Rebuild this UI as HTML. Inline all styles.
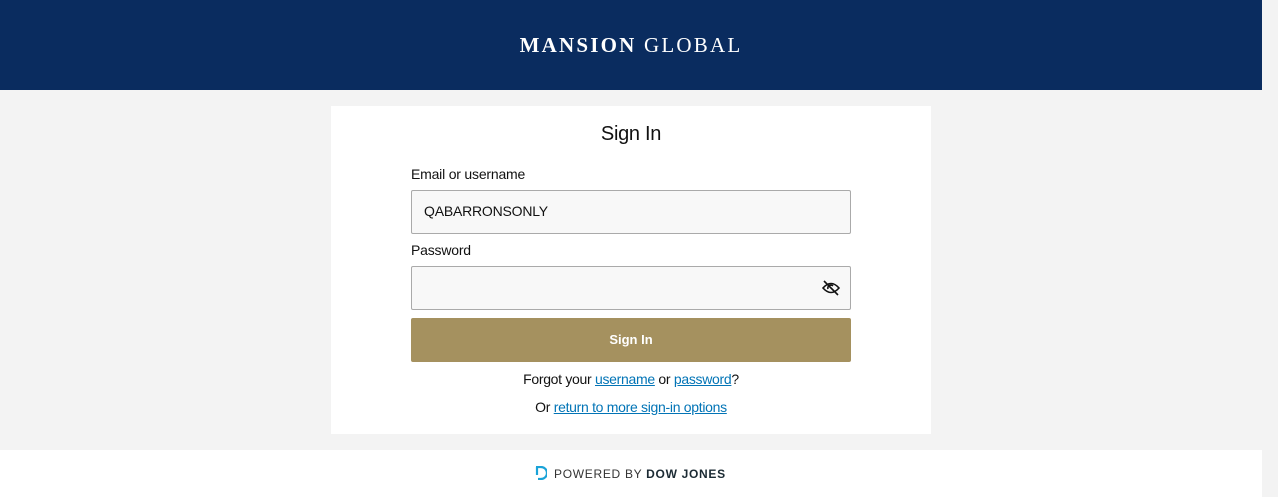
<!DOCTYPE html>
<html><head><meta charset="utf-8"><style>
*{margin:0;padding:0;box-sizing:border-box}
body{width:1278px;height:497px;background:#f3f3f3;font-family:"Liberation Sans",sans-serif;color:#111;position:relative;overflow:hidden}
.hdr{position:absolute;left:0;top:0;width:1262px;height:90px;background:#0a2c5f}
.logo{position:absolute;left:0;width:1262px;top:33px;text-align:center;color:#fff;font-family:"Liberation Serif",serif;font-size:21px;letter-spacing:2.2px}
.card{position:absolute;left:331px;top:106px;width:600px;height:328px;background:#fff}
h1{position:absolute;left:0;width:600px;top:17px;text-align:center;font-weight:normal;font-size:20px;letter-spacing:-0.3px}
.lbl{position:absolute;left:80px;font-size:14px;letter-spacing:-0.2px}
.inp{position:absolute;left:80px;width:440px;height:44px;background:#f8f8f8;border:1px solid #aaa;border-radius:2px;font-size:14px;padding:12px 12px;letter-spacing:-0.2px}
.btn{position:absolute;left:80px;top:212px;width:440px;height:44px;background:#a5915f;border-radius:2px;color:#fff;font-weight:bold;font-size:13px;text-align:center;line-height:44px}
.t{position:absolute;left:0;width:600px;text-align:center;font-size:14px;letter-spacing:-0.3px}
a{color:#0274b6;text-decoration:underline}
.ftr{position:absolute;left:0;top:450px;width:1262px;height:47px;background:#fff}
.pw{position:absolute;left:554px;top:467px;font-size:12px;letter-spacing:0.7px;color:#333}
</style></head><body>
<div class="hdr"><div class="logo"><b>MANSION</b> GLOBAL</div></div>
<div class="card">
<h1>Sign In</h1>
<div class="lbl" style="top:60px">Email or username</div>
<div class="inp" style="top:84px">QABARRONSONLY</div>
<div class="lbl" style="top:136px">Password</div>
<div class="inp" style="top:160px"></div>
<svg style="position:absolute;left:490px;top:173px" width="20" height="18" viewBox="0 0 20 18"><path d="M2 9 Q10 0 18 9 Q10 18 2 9Z" fill="none" stroke="#111" stroke-width="1.6"/><path d="M7 10 A3 3 0 0 1 12 7" fill="none" stroke="#111" stroke-width="1.6"/><path d="M3 2 L17 16" stroke="#111" stroke-width="1.6"/></svg>
<div class="btn">Sign In</div>
<div class="t" style="top:265px">Forgot your <a>username</a> or <a>password</a>?</div>
<div class="t" style="top:293px">Or <a>return to more sign-in options</a></div>
</div>
<div class="ftr"></div>
<svg style="position:absolute;left:535px;top:466px" width="12" height="14" viewBox="0 0 12 14"><path d="M1 1H6A5 5 0 0 1 6 13H3" fill="none" stroke="#1aa3d8" stroke-width="2.2"/><path d="M2 1V9" stroke="#1aa3d8" stroke-width="2.2"/></svg>
<div class="pw">POWERED BY <b style="color:#1b2a33">DOW JONES</b></div>
</body></html>
